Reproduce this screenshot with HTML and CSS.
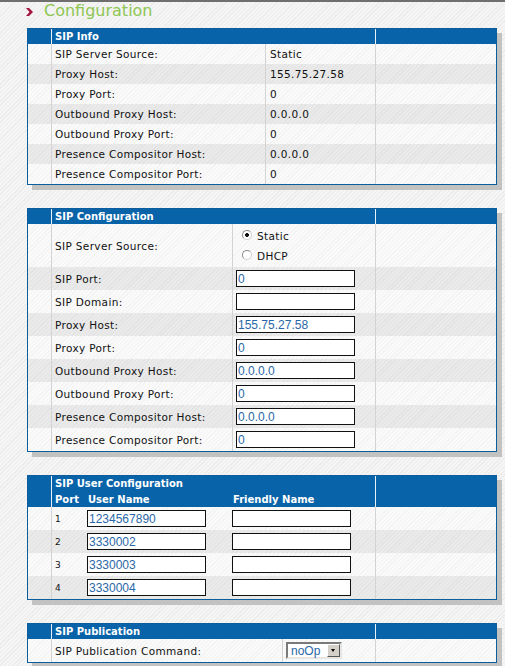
FILE: index.html
```html
<!DOCTYPE html>
<html lang="en">
<head>
    <meta charset="UTF-8">
    <title>Configuration</title>
    <link rel="stylesheet" href="styles.css">
</head>
<body>

<h1 class="page-title">
  <svg class="bullet" width="7" height="8" viewBox="0 0 7 8"><polygon points="0,0 3,0 7,4 3,8 0,8 3.5,4" fill="#a3133f"/></svg>
  Configuration
</h1>

<!-- SIP Info -->
<div class="panel-box">
<table class="panel info">
  <colgroup>
    <col class="c-gutter"><col class="c-label"><col class="c-value"><col class="c-extra">
  </colgroup>
  <thead>
    <tr><th class="gutter"></th><th colspan="2">SIP Info</th><th></th></tr>
  </thead>
  <tbody>
    <tr><td class="gutter"></td><td>SIP Server Source:</td><td>Static</td><td></td></tr>
    <tr><td class="gutter"></td><td>Proxy Host:</td><td>155.75.27.58</td><td></td></tr>
    <tr><td class="gutter"></td><td>Proxy Port:</td><td>0</td><td></td></tr>
    <tr><td class="gutter"></td><td>Outbound Proxy Host:</td><td>0.0.0.0</td><td></td></tr>
    <tr><td class="gutter"></td><td>Outbound Proxy Port:</td><td>0</td><td></td></tr>
    <tr><td class="gutter"></td><td>Presence Compositor Host:</td><td>0.0.0.0</td><td></td></tr>
    <tr><td class="gutter"></td><td>Presence Compositor Port:</td><td>0</td><td></td></tr>
  </tbody>
</table>
</div>

<!-- SIP Configuration -->
<div class="panel-box">
<table class="panel config">
  <colgroup>
    <col class="c-gutter"><col class="c-label"><col class="c-value"><col class="c-extra">
  </colgroup>
  <thead>
    <tr><th class="gutter"></th><th colspan="2">SIP Configuration</th><th></th></tr>
  </thead>
  <tbody>
    <tr class="radio-row">
      <td class="gutter"></td>
      <td>SIP Server Source:</td>
      <td class="radios">
        <label class="radio"><input type="radio" name="src" checked> Static</label>
        <label class="radio"><input type="radio" name="src"> DHCP</label>
      </td>
      <td></td>
    </tr>
    <tr><td class="gutter"></td><td>SIP Port:</td><td><input class="field" type="text" value="0"></td><td></td></tr>
    <tr><td class="gutter"></td><td>SIP Domain:</td><td><input class="field" type="text" value=""></td><td></td></tr>
    <tr><td class="gutter"></td><td>Proxy Host:</td><td><input class="field" type="text" value="155.75.27.58"></td><td></td></tr>
    <tr><td class="gutter"></td><td>Proxy Port:</td><td><input class="field" type="text" value="0"></td><td></td></tr>
    <tr><td class="gutter"></td><td>Outbound Proxy Host:</td><td><input class="field" type="text" value="0.0.0.0"></td><td></td></tr>
    <tr><td class="gutter"></td><td>Outbound Proxy Port:</td><td><input class="field" type="text" value="0"></td><td></td></tr>
    <tr><td class="gutter"></td><td>Presence Compositor Host:</td><td><input class="field" type="text" value="0.0.0.0"></td><td></td></tr>
    <tr><td class="gutter"></td><td>Presence Compositor Port:</td><td><input class="field" type="text" value="0"></td><td></td></tr>
  </tbody>
</table>
</div>

<!-- SIP User Configuration -->
<div class="panel-box">
<table class="panel users">
  <colgroup>
    <col class="c-gutter"><col class="c-port"><col class="c-user"><col class="c-friendly"><col class="c-extra">
  </colgroup>
  <thead>
    <tr><th class="gutter" rowspan="2"></th><th colspan="3">SIP User Configuration</th><th rowspan="2"></th></tr>
    <tr class="sub"><th>Port</th><th class="plain">User Name</th><th class="plain">Friendly Name</th></tr>
  </thead>
  <tbody>
    <tr><td class="gutter"></td><td class="port">1</td><td class="plain"><input class="field" type="text" value="1234567890"></td><td class="plain"><input class="field" type="text" value=""></td><td></td></tr>
    <tr><td class="gutter"></td><td class="port">2</td><td class="plain"><input class="field" type="text" value="3330002"></td><td class="plain"><input class="field" type="text" value=""></td><td></td></tr>
    <tr><td class="gutter"></td><td class="port">3</td><td class="plain"><input class="field" type="text" value="3330003"></td><td class="plain"><input class="field" type="text" value=""></td><td></td></tr>
    <tr><td class="gutter"></td><td class="port">4</td><td class="plain"><input class="field" type="text" value="3330004"></td><td class="plain"><input class="field" type="text" value=""></td><td></td></tr>
  </tbody>
</table>
</div>

<!-- SIP Publication -->
<div class="panel-box">
<table class="panel publish">
  <colgroup>
    <col class="c-gutter"><col class="c-label"><col class="c-value"><col class="c-extra">
  </colgroup>
  <thead>
    <tr><th class="gutter"></th><th colspan="2">SIP Publication</th><th></th></tr>
  </thead>
  <tbody>
    <tr>
      <td class="gutter"></td>
      <td>SIP Publication Command:</td>
      <td>
        <div class="dropdown"><span class="dropdown-value">noOp</span><span class="dropdown-btn"></span></div>
      </td>
      <td></td>
    </tr>
  </tbody>
</table>
</div>

</body>
</html>
```

FILE: styles.css
```css
body {
	margin: 0;
	border-top: 2px solid #6f6f6f;
	min-height: 664px;
	background: repeating-linear-gradient(-45deg, #f5f5f5 0, #f5f5f5 2px, #ececec 2px, #ececec 3px);
	font-family: "DejaVu Sans", Verdana, sans-serif;
	font-size: 10.5px;
	color: #111;
}

/* Page heading */
.page-title {
	display: flex;
	align-items: center;
	gap: 11px;
	margin: 0 0 9px 26px;
	font-size: 16px;
	font-weight: normal;
	line-height: 17px;
	color: #8dc653;
}
.bullet {
	position: relative;
	top: 1px;
}

/* Panels: the grey drop shadow sits behind, offset 5px */
.panel-box {
	position: relative;
	width: 470px;
	margin: 0 0 23px 27px;
}
.panel-box::before {
	content: "";
	position: absolute;
	left: 5px;
	top: 5px;
	width: 470px;
	height: 100%;
	background: #c2c2c2;
}
.panel {
	position: relative;
	width: 470px;
	border: 1px solid #0b5d9c;
	border-spacing: 0;
	table-layout: fixed;
	background: repeating-linear-gradient(-45deg, #fafafa 0, #fafafa 2px, #f3f3f3 2px, #f3f3f3 3px);
}
.c-gutter { width: 23px; }
.c-extra { width: 121px; }
.info .c-label { width: 214px; }
.info .c-value { width: 110px; }
.config .c-label { width: 181px; }
.config .c-value { width: 143px; }
.users .c-port { width: 34px; }
.users .c-user { width: 145px; }
.users .c-friendly { width: 145px; }
.publish .c-label { width: 231px; }
.publish .c-value { width: 93px; }

.panel th {
	height: 15px;
	padding: 0 0 0 3px;
	background: #0863a8;
	border-left: 1px solid #e8f0f8;
	color: #fff;
	font-size: 10px;
	font-weight: bold;
	text-align: left;
	white-space: nowrap;
}
.panel th.plain {
	border-left: 0;
}
.users .sub th {
	height: 16px;
}
.panel td {
	height: 20px;
	padding: 0 0 0 3px;
	border-left: 1px solid #d3d3d3;
	letter-spacing: 0.35px;
	white-space: nowrap;
}
.panel .gutter,
.panel th.gutter {
	border-left: 0;
	padding: 0;
}
.panel td.plain {
	border-left: 0;
	padding-left: 2px;
}
.panel tbody tr:nth-child(even) td {
	background: repeating-linear-gradient(-45deg, #eaeaea 0, #eaeaea 2px, #e3e3e3 2px, #e3e3e3 3px);
}
.info td:nth-child(3) {
	padding-left: 4px;
}
.config td,
.users td,
.publish td {
	height: 23px;
}
.config .radio-row td {
	height: 42px;
}
.config td.radios {
	vertical-align: top;
	height: 39px;
	padding-top: 3px;
}
.users td.port {
	font-size: 9px;
}

/* Radios */
.radio {
	display: flex;
	align-items: flex-start;
	height: 20px;
	line-height: 19px;
}
.radio input {
	appearance: none;
	width: 10px;
	height: 10px;
	margin: 3px 5px 0 6px;
	border: 1px solid #8a8a8a;
	border-right-color: #d0d0d0;
	border-bottom-color: #d0d0d0;
	border-radius: 50%;
	background: #fff;
}
.radio input:checked {
	background: radial-gradient(circle, #111 0, #111 1.6px, #fff 2.2px);
}

/* Text fields */
.field {
	box-sizing: border-box;
	width: 119px;
	height: 17px;
	margin: 0;
	padding: 0 1px;
	border: 1px solid #111;
	background: #fff;
	font-family: "Liberation Sans", Arial, sans-serif;
	font-size: 12px;
	color: #2a67a8;
	vertical-align: middle;
}

/* Select box */
.dropdown {
	box-sizing: border-box;
	display: flex;
	align-items: center;
	justify-content: space-between;
	width: 56px;
	height: 17px;
	border: 2px solid;
	border-color: #7a7a7a #e6e6e6 #e6e6e6 #7a7a7a;
	background: #fff;
	font-family: "Liberation Sans", Arial, sans-serif;
	font-size: 12px;
	letter-spacing: 0;
	color: #2a67a8;
}
.dropdown-value {
	padding-left: 3px;
}
.dropdown-btn {
	position: relative;
	width: 13px;
	height: 13px;
	background: #d4d0c8;
	border: 1px solid;
	border-color: #fff #555 #555 #fff;
	box-sizing: border-box;
}
.dropdown-btn::after {
	content: "";
	position: absolute;
	left: 3px;
	top: 4px;
	border-width: 3px 2.5px 0 2.5px;
	border-style: solid;
	border-color: #000 transparent transparent transparent;
}
```
